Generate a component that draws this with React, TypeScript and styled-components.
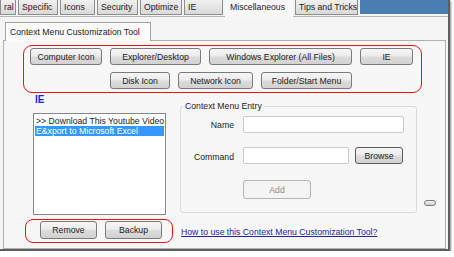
import React from "react";
import styled, { createGlobalStyle } from "styled-components";

const GlobalStyle = createGlobalStyle`
    body {
        margin: 0;
        background: #ffffff;
        font-family: "Liberation Sans", Arial, sans-serif;
        font-size: 8.7px;
        color: #1b1b1b;
    }
`;

const topTabs = [
    { label: "ral", width: 16 },
    { label: "Specific", width: 40 },
    { label: "Icons", width: 35 },
    { label: "Security", width: 41 },
    { label: "Optimize", width: 42 },
    { label: "IE", width: 39 },
    { label: "Miscellaneous", width: 68, active: true },
    { label: "Tips and Tricks", width: 63 },
];

const firstRow = [
    { label: "Computer Icon", width: 72 },
    { label: "Explorer/Desktop", width: 91 },
    { label: "Windows Explorer (All Files)", width: 143 },
    { label: "IE", width: 53 },
];
const secondRow = [
    { label: "Disk Icon", width: 60 },
    { label: "Network Icon", width: 75 },
    { label: "Folder/Start Menu", width: 91 },
];

export default function App() {
    return (
        <>
            <GlobalStyle />
            <Window>
                {/* Top tab strip */}
                <TabStrip>
                    {topTabs.map((t) => (
                        <TopTab key={t.label} $width={t.width} $active={!!t.active}>
                            {t.label}
                        </TopTab>
                    ))}
                    <BlueFiller />
                </TabStrip>

                <OuterPage>
                    <InnerTabs>
                        <InnerTab>Context Menu Customization Tool</InnerTab>
                    </InnerTabs>
                    <InnerPage>
                        {/* Preset buttons */}
                        <RedBox>
                            <ButtonRow $indent={6}>
                                {firstRow.map((b) => (
                                    <Button key={b.label} $width={b.width}>{b.label}</Button>
                                ))}
                            </ButtonRow>
                            <ButtonRow $indent={86}>
                                {secondRow.map((b) => (
                                    <Button key={b.label} $width={b.width}>{b.label}</Button>
                                ))}
                            </ButtonRow>
                        </RedBox>

                        <Middle>
                            <ListColumn>
                                <ListTitle>IE</ListTitle>
                                <ListBox>
                                    <ListItem>&gt;&gt; Download This Youtube Video</ListItem>
                                    <ListItem $selected>E&amp;xport to Microsoft Excel</ListItem>
                                </ListBox>
                            </ListColumn>

                            <Group>
                                <Legend>Context Menu Entry</Legend>
                                <FormGrid>
                                    <FieldLabel>Name</FieldLabel>
                                    <TextBox $width={161} />
                                    <FieldLabel>Command</FieldLabel>
                                    <FieldLine>
                                        <TextBox $width={106} />
                                        <Button $width={48} $dark>Browse</Button>
                                    </FieldLine>
                                    <span />
                                    <Button $width={68} $height={19} $disabled>Add</Button>
                                </FormGrid>
                            </Group>

                            <TinyButton />
                        </Middle>

                        <Bottom>
                            <SmallRedBox>
                                <Button $width={57} $height={18}>Remove</Button>
                                <Button $width={57} $height={18}>Backup</Button>
                            </SmallRedBox>
                            <HelpLink href="#">How to use this Context Menu Customization Tool?</HelpLink>
                        </Bottom>
                    </InnerPage>
                </OuterPage>
            </Window>
        </>
    );
}

const Window = styled.div`
    width: 448px;
    height: 249px;
    display: flex;
    flex-direction: column;
    background: #f2f2f2;
    border-right: 2px solid #5e5e5e;
    border-bottom: 2px solid #5e5e5e;
    box-shadow: 1px 1px 2px rgba(0, 0, 0, 0.45);
    overflow: hidden;
`;

const TabStrip = styled.div`
    height: 17px;
    flex: none;
    display: flex;
    align-items: flex-start;
    gap: 2px;
    border-bottom: 1px solid #b4b4b4;
    box-sizing: border-box;
    background: #f4f4f4;
`;

const TopTab = styled.div<{ $width: number; $active: boolean }>`
    box-sizing: border-box;
    width: ${(p) => p.$width}px;
    height: ${(p) => (p.$active ? 17 : 15)}px;
    padding: 2px 0 0 ${(p) => (p.$active ? 5 : 3)}px;
    white-space: nowrap;
    overflow: hidden;
    line-height: 10px;
    color: #1b1b1b;
    background: ${(p) =>
        p.$active ? "#f8f8f8" : "linear-gradient(#f0f0f0, #d9d9d9)"};
    border: ${(p) => (p.$active ? "none" : "1px solid #8d8d8d")};
    border-top: none;
    position: relative;
    z-index: ${(p) => (p.$active ? 1 : 0)};
`;

const BlueFiller = styled.div`
    flex: 1;
    height: 14px;
    background: #4a7db1;
`;

const OuterPage = styled.div`
    flex: 1;
    display: flex;
    flex-direction: column;
    padding: 5px 0 0 3px;
    background: #f5f5f5;
`;

const InnerTabs = styled.div`
    display: flex;
    padding-left: 2px;
`;

const InnerTab = styled.div`
    width: 146px;
    height: 19px;
    box-sizing: border-box;
    padding: 4px 0 0 4px;
    line-height: 10px;
    background: #fbfbfb;
    border: 1px solid #a3a3a3;
    border-bottom: none;
    margin-bottom: -1px;
    position: relative;
    z-index: 1;
`;

const InnerPage = styled.div`
    width: 443px;
    flex: 1;
    box-sizing: border-box;
    border: 1px solid #b0b0b0;
    background: #f7f7f7;
    display: flex;
    flex-direction: column;
`;

const RedBox = styled.div`
    width: 399px;
    height: 48px;
    box-sizing: border-box;
    margin: 4px 0 0 19px;
    padding-top: 2px;
    border: 1.5px solid #e8141c;
    border-radius: 9px;
    display: flex;
    flex-direction: column;
    gap: 7px;
`;

const ButtonRow = styled.div<{ $indent: number }>`
    display: flex;
    gap: 8px;
    padding-left: ${(p) => p.$indent}px;
`;

const Button = styled.div<{ $width: number; $height?: number; $disabled?: boolean; $dark?: boolean }>`
    width: ${(p) => p.$width}px;
    height: ${(p) => p.$height ?? 17}px;
    box-sizing: border-box;
    display: flex;
    align-items: center;
    justify-content: center;
    white-space: nowrap;
    color: ${(p) => (p.$disabled ? "#8a8a8a" : "#1b1b1b")};
    border: 1px solid ${(p) => (p.$disabled ? "#b5b5b5" : p.$dark ? "#5a5a5a" : "#7a7a7a")};
    border-radius: 3px;
    background: ${(p) =>
        p.$disabled
            ? "#f4f4f4"
            : "linear-gradient(#f6f6f6 0%, #ebebeb 48%, #dcdcdc 52%, #d2d2d2 100%)"};
`;

const Middle = styled.div`
    display: flex;
    align-items: flex-start;
    margin-top: 2px;
`;

const ListColumn = styled.div`
    display: flex;
    flex-direction: column;
    margin-left: 29px;
`;

const ListTitle = styled.div`
    padding-left: 2px;
    height: 18px;
    line-height: 10px;
    font-weight: bold;
    font-size: 10px;
    color: #1e1ee6;
`;

const ListBox = styled.div`
    width: 133px;
    height: 102px;
    box-sizing: border-box;
    border: 1px solid #828790;
    background: #ffffff;
    padding: 2px 1px;
    overflow: hidden;
`;

const ListItem = styled.div<{ $selected?: boolean }>`
    height: 10px;
    line-height: 10px;
    padding-left: 1px;
    white-space: nowrap;
    color: ${(p) => (p.$selected ? "#ffffff" : "#1b1b1b")};
    background: ${(p) => (p.$selected ? "#3399ff" : "transparent")};
`;

const Group = styled.fieldset`
    width: 237px;
    height: 112px;
    box-sizing: border-box;
    margin: 6px 0 0 14px;
    padding: 4px 0 0 0;
    border: 1px solid #d5dde3;
    border-radius: 3px;
`;

const Legend = styled.legend`
    padding: 0 2px;
    margin-left: 2px;
    line-height: 11px;
    color: #1b1b1b;
`;

const FormGrid = styled.div`
    display: grid;
    grid-template-columns: 53px auto;
    column-gap: 9px;
    row-gap: 14px;
    align-items: center;
    justify-items: start;
`;

const FieldLabel = styled.div`
    justify-self: end;
    line-height: 10px;
`;

const FieldLine = styled.div`
    display: flex;
    gap: 6px;
    margin-bottom: 2px;
`;

const TextBox = styled.div<{ $width: number }>`
    width: ${(p) => p.$width}px;
    height: 17px;
    box-sizing: border-box;
    border: 1px solid #c6ccd3;
    border-radius: 2px;
    background: #ffffff;
`;

const TinyButton = styled.div`
    width: 12px;
    height: 6px;
    margin: 105px 0 0 7px;
    box-sizing: border-box;
    border: 1px solid #7a7a7a;
    border-radius: 3px;
    background: linear-gradient(#f2f2f2, #d0d0d0);
`;

const Bottom = styled.div`
    display: flex;
    align-items: center;
    margin-top: 4px;
`;

const SmallRedBox = styled.div`
    width: 148px;
    height: 24px;
    box-sizing: border-box;
    margin-left: 21px;
    padding: 1px 0 0 14px;
    border: 1.5px solid #e8141c;
    border-radius: 8px;
    display: flex;
    align-items: flex-start;
    gap: 8px;
`;

const HelpLink = styled.a`
    margin-left: 8px;
    color: #2424a8;
    text-decoration: underline;
    line-height: 10px;
    margin-top: 2px;
`;
